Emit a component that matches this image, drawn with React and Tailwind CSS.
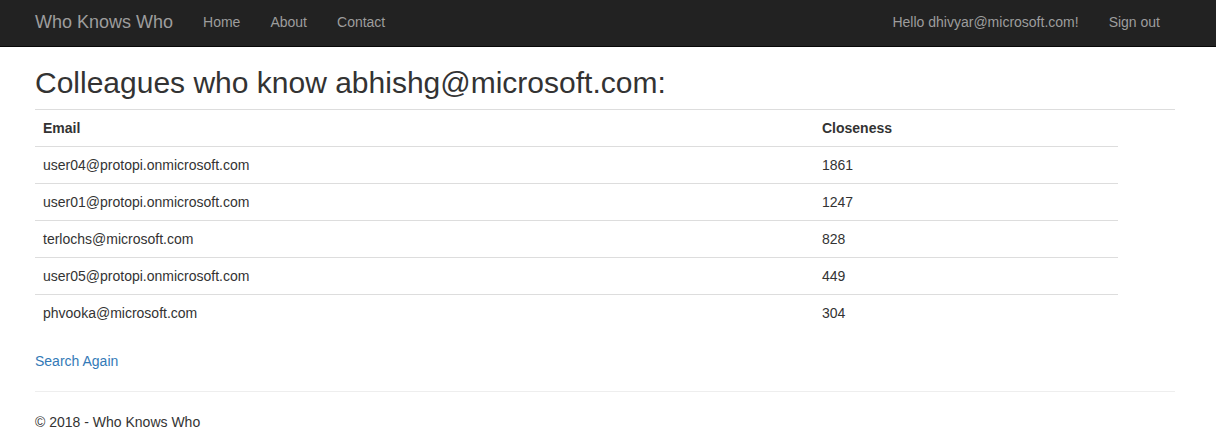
import React from 'react';

const rows = [
  { email: 'user04@protopi.onmicrosoft.com', closeness: 1861 },
  { email: 'user01@protopi.onmicrosoft.com', closeness: 1247 },
  { email: 'terlochs@microsoft.com', closeness: 828 },
  { email: 'user05@protopi.onmicrosoft.com', closeness: 449 },
  { email: 'phvooka@microsoft.com', closeness: 304 },
];

function App() {
  return (
    <div className="min-h-[435px] bg-white text-[14px] leading-[20px] text-[#333] font-['Liberation_Sans',Arial,sans-serif]">
      {/* Navbar */}
      <nav className="h-[47px] bg-[#222] border-b border-[#080808]">
        <div className="flex h-[44px] items-center justify-between px-[20px]">
          <div className="flex items-center">
            <a className="px-[15px] text-[18px] text-[#9d9d9d]">Who Knows Who</a>
            <a className="px-[15px] text-[#9d9d9d]">Home</a>
            <a className="px-[15px] text-[#9d9d9d]">About</a>
            <a className="px-[15px] text-[#9d9d9d]">Contact</a>
          </div>
          <div className="flex items-center pr-[21px]">
            <span className="px-[15px] text-[#9d9d9d]">Hello dhivyar@microsoft.com!</span>
            <a className="px-[15px] text-[#9d9d9d]">Sign out</a>
          </div>
        </div>
      </nav>

      <div className="mx-[35px] w-[1140px]">
        <h2 className="mt-[19px] text-[30px] leading-[33px] font-normal text-[#333]">
          Colleagues who know abhishg@microsoft.com:
        </h2>
        <div className="mt-[10px] border-t border-[#ddd]" />

        <table className="w-[1083px] border-collapse">
          <thead>
            <tr className="border-b border-[#ddd]">
              <th className="w-[779px] p-[8px] text-left font-bold">Email</th>
              <th className="p-[8px] text-left font-bold">Closeness</th>
            </tr>
          </thead>
          <tbody>
            {rows.map((r, i) => (
              <tr key={r.email} className={i < rows.length - 1 ? 'border-b border-[#ddd]' : ''}>
                <td className="p-[8px]">{r.email}</td>
                <td className="p-[8px]">{r.closeness}</td>
              </tr>
            ))}
          </tbody>
        </table>

        <div className="mt-[20px]">
          <a className="text-[#337ab7]">Search Again</a>
        </div>

        <hr className="mt-[20px] border-t border-[#eee]" />

        <footer className="mt-[20px]">
          <p>© 2018 - Who Knows Who</p>
        </footer>
      </div>
    </div>
  );
}

export default App;
